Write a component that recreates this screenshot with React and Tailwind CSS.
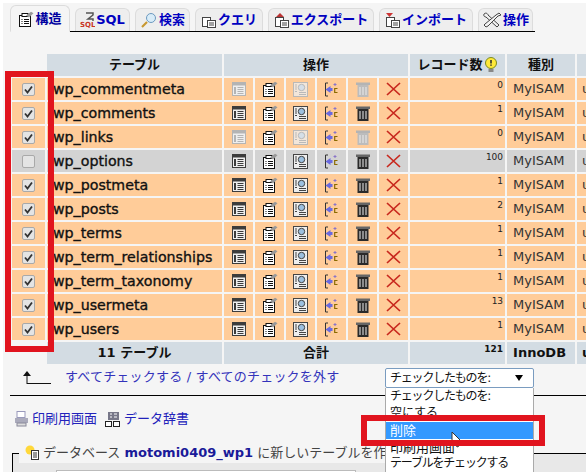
const FONT = "font-['DejaVu_Sans','Noto_Sans_CJK_JP',sans-serif]";

function Browse({ dim }) {
  const c = dim ? "#b4b4b4" : "#3c3c3c";
  return (
    <svg width="14" height="14" viewBox="0 0 14 14" className="block">
      <rect x="0.5" y="0.5" width="13" height="13" fill="#eee" stroke={c} />
      <rect x="1" y="1" width="12" height="2.5" fill={c} />
      <rect x="2" y="5" width="2" height="7" fill={c} />
      <path d="M5.5 5.5h6M5.5 7.5h6M5.5 9.5h6M5.5 11.5h6" stroke={c} />
    </svg>
  );
}
function Structure() {
  return (
    <svg width="16" height="16" viewBox="0 0 16 16" className="block">
      <rect x="1.5" y="4.5" width="11" height="11" fill="#fff" stroke="#111" />
      <rect x="4" y="2.5" width="6" height="3" fill="#fff" stroke="#111" />
      <path d="M3.5 8.5h1M6 8.5h5M3.5 10.5h1M6 10.5h5M3.5 12.5h1M6 12.5h5" stroke="#111" />
      <path d="M8 4.5L13 .7l2.5 1.5L11 6.5z" fill="#999" />
    </svg>
  );
}
function Search({ dim }) {
  const c = dim ? "#b9b9b9" : "#444";
  return (
    <svg width="15" height="15" viewBox="0 0 15 15" className="block">
      <rect x="0.5" y="0.5" width="14" height="14" fill={dim ? "#f2e6da" : "#eee"} stroke={c} />
      <circle cx="8.5" cy="5.5" r="3.2" fill={dim ? "#d5dfe8" : "#9cc0e0"} stroke={c} />
      <path d="M2 3h2M2 5h2M2 7h2M2 9.5h2M6 10.5h7M6 12.5h7" stroke={c} />
    </svg>
  );
}
function Insert() {
  return (
    <svg width="15" height="15" viewBox="0 0 15 15" className="block">
      <path d="M4 1H1.5v13H4" fill="none" stroke="#333" />
      <path d="M1.5 7.5l5-3.5v2h2v3h-2v2z" fill="#6a6ae0" />
      <path d="M13.5 6.5h-2.8v4h2.8" fill="none" stroke="#8a6a00" strokeWidth="1.2" />
      <path d="M11 1v3M9.5 2.5h3" stroke="#8a74c8" />
    </svg>
  );
}
function Trash({ dim }) {
  return (
    <svg width="14" height="15" viewBox="0 0 14 15" className="block">
      <rect x="0" y="0.5" width="14" height="2.5" fill={dim ? "#b4b4b4" : "#666"} />
      <path d="M1.5 3h11v12h-11z" fill={dim ? "#bcbcbc" : "#2a2a2a"} />
      <path d="M4 5v8M7 5v8M10 5v8" stroke={dim ? "#ececec" : "#eee"} />
    </svg>
  );
}
function Drop() {
  return (
    <svg width="15" height="14" viewBox="0 0 15 14" className="block">
      <path d="M1 1l13 12M14 1L1 13" stroke="#c8281e" strokeWidth="1.7" fill="none" />
    </svg>
  );
}
function Check({ on }) {
  return (
    <span className="flex h-[13px] w-[13px] items-center justify-center rounded-[2px] border border-[#a9a9a9] bg-[#e4e4e4]">
      {on && (
        <svg width="9" height="9" viewBox="0 0 9 9">
          <path d="M1 4.5l2.5 3L8 1.5" fill="none" stroke="#333" strokeWidth="1.8" />
        </svg>
      )}
    </span>
  );
}

const rows = [
  ["wp_commentmeta", "0", true, true],
  ["wp_comments", "1", true, false],
  ["wp_links", "0", true, true],
  ["wp_options", "100", false, false],
  ["wp_postmeta", "1", true, false],
  ["wp_posts", "2", true, false],
  ["wp_terms", "1", true, false],
  ["wp_term_relationships", "1", true, false],
  ["wp_term_taxonomy", "1", true, false],
  ["wp_usermeta", "13", true, false],
  ["wp_users", "1", true, false],
];

function Row({ name, count, on, dim }) {
  const bg = on ? "bg-[#ffcc99]" : "bg-[#d3d3d3]";
  const cell = `${bg} h-[22px] p-0`;
  const ic = "flex h-[22px] items-center justify-center";
  return (
    <tr>
      <td className={cell}><div className={ic}><Check on={on} /></div></td>
      <td className={`${cell} whitespace-nowrap pl-[6px] text-[14.2px] leading-[22px] text-[#111] [-webkit-text-stroke:0.35px_#111]`}>{name}</td>
      <td className={cell}><div className={ic}><Browse dim={dim} /></div></td>
      <td className={cell}><div className={ic}><Structure /></div></td>
      <td className={cell}><div className={ic}><Search dim={dim} /></div></td>
      <td className={cell}><div className={ic}><Insert /></div></td>
      <td className={cell}><div className={ic}><Trash dim={dim} /></div></td>
      <td className={cell}><div className={ic}><Drop /></div></td>
      <td className={`${cell} pr-[2px] text-right align-top text-[9px] leading-[14px] text-[#222]`}>{count}</td>
      <td className={`${cell} pl-[6px] text-[13px] leading-[22px] text-[#333]`}>MyISAM</td>
      <td className={`${cell} pl-[5px] text-[13px] leading-[22px] text-[#333]`}>utf8</td>
    </tr>
  );
}

function Tab({ icon, label, active, w }) {
  return (
    <div className={`flex items-center justify-center gap-[1px] rounded-t-[6px] border border-[#dcdcdc] text-[13px] font-semibold ${w} ${active ? "-mb-px h-[27px] border-b-[#f5f5f5] bg-[#f5f5f5] text-[#0000a0]" : "h-[23px] border-b-0 bg-[#eeeeee] text-[#0000c0]"}`}>
      {icon}
      <span>{label}</span>
    </div>
  );
}

function TabIcon({ color = "#444", kind }) {
  if (kind === "sql")
    return (
      <svg width="15" height="16" viewBox="0 0 15 16"><path d="M6 1h7v2L8 7h5v2" fill="none" stroke="#555" strokeWidth="1.5" /><text x="0" y="15" fontSize="7" fontWeight="700" fill="#c8341e">SQL</text></svg>
    );
  if (kind === "search")
    return (
      <svg width="18" height="16" viewBox="0 0 18 16"><circle cx="11" cy="6" r="4.5" fill="#d8ecf8" stroke="#6c9ac0" /><path d="M7 10l-5 5" stroke="#c89830" strokeWidth="2.2" /></svg>
    );
  if (kind === "ops")
    return (
      <svg width="20" height="16" viewBox="0 0 20 16">
        <path d="M2 2c2-2 4 0 4 1l11 10-2 2L4 5C3 5 1 4 2 2z" fill="#f2f2f2" stroke="#444" />
        <path d="M17 1l2 2-3 1L6 14l-2 1-2-2 1-1L14 3z" fill="#f2f2f2" stroke="#444" />
      </svg>
    );
  return (
    <svg width="16" height="15" viewBox="0 0 16 15">
      {kind === "export" && <path d="M6 0l4 4H2z" fill="#b33" />}
      {kind === "import" && <path d="M1 0h7L4.5 4z" fill="#c33" />}
      <rect x="1.5" y="4.5" width="8" height="9" fill="#fff" stroke={color} />
      <rect x="6.5" y="7.5" width="8" height="7" fill="#fff" stroke={color} />
      <path d="M8 10h5M8 12h5" stroke={color} />
    </svg>
  );
}

export default function App() {
  const th = "bg-[#d3dce3] h-[22px] p-0 text-center text-[13px] font-semibold text-[#111]";
  const tf = "bg-[#d3dce3] h-[22px] p-0 font-semibold text-[#111]";
  return (
    <div className={`relative box-border h-[472px] w-[586px] overflow-hidden border-l-[3px] border-t-[3px] border-white bg-[#f5f5f5] ${FONT}`}>
      <div className="ml-[7px] flex h-[29px] w-[525px] items-end gap-[5px] border-b border-black">
        <Tab active w="w-[60px]" label="構造" icon={<Structure />} />
        <Tab w="w-[55px]" label="SQL" icon={<TabIcon kind="sql" />} />
        <Tab w="w-[55px]" label="検索" icon={<TabIcon kind="search" />} />
        <Tab w="w-[68px]" label="クエリ" icon={<TabIcon kind="query" />} />
        <Tab w="w-[106px]" label="エクスポート" icon={<TabIcon kind="export" />} />
        <Tab w="w-[94px]" label="インポート" icon={<TabIcon kind="import" />} />
        <Tab w="w-[55px]" label="操作" icon={<TabIcon kind="ops" />} />
      </div>

      <table className="ml-[7px] mt-[20px] w-[612px] table-fixed border-separate border-spacing-[2px]">
        <colgroup>
          <col className="w-[33px]" />
          <col className="w-[175px]" />
          <col className="w-[29px]" />
          <col className="w-[29px]" />
          <col className="w-[29px]" />
          <col className="w-[29px]" />
          <col className="w-[29px]" />
          <col className="w-[29px]" />
          <col className="w-[95px]" />
          <col className="w-[68px]" />
          <col />
        </colgroup>
        <thead>
          <tr>
            <th className="p-0" />
            <th className={th}>テーブル</th>
            <th className={th} colSpan={6}>操作</th>
            <th className={th}>
              <span className="inline-flex items-center gap-[1px]">
                レコード数
                <svg width="14" height="16" viewBox="0 0 14 16">
                  <circle cx="7" cy="6" r="5.5" fill="#ffe93a" stroke="#7a8a20" />
                  <path d="M7 3v3.5M7 7.6v1.2" stroke="#333" strokeWidth="1.6" />
                  <rect x="4.5" y="12" width="5" height="3" fill="#888" />
                </svg>
              </span>
            </th>
            <th className={th}>種別</th>
            <th className={th} />
          </tr>
        </thead>
        <tbody>
          {rows.map((r) => (
            <Row key={r[0]} name={r[0]} count={r[1]} on={r[2]} dim={r[3]} />
          ))}
        </tbody>
        <tfoot>
          <tr>
            <td className="p-0" />
            <td className={`${tf} text-center text-[13px]`}>11 テーブル</td>
            <td className={`${tf} text-center text-[13px]`} colSpan={6}>合計</td>
            <td className={`${tf} pr-[2px] text-right align-top text-[9px] font-bold leading-[14px]`}>121</td>
            <td className={`${tf} pl-[6px] text-[13px]`}>InnoDB</td>
            <td className={`${tf} pl-[5px] text-[13px]`}>utf8</td>
          </tr>
        </tfoot>
      </table>

      <div className="ml-[18px] flex h-[22px] items-center gap-[14px] text-[13px] tracking-[0.2px] text-[#3333bb]">
        <svg width="30" height="14" viewBox="0 0 30 14" className="block">
          <path d="M6 14V3M6 13.5h24" stroke="#111" strokeWidth="1" fill="none" />
          <path d="M2 6l4-5 4 5z" fill="#111" />
        </svg>
        <span>すべてチェックする / すべてのチェックを外す</span>
      </div>
      <div className="ml-[7px] mt-[7px] h-px w-[576px] bg-black" />

      <div className="ml-[11px] mt-[13px] flex h-[19px] items-center gap-[8px] text-[13px] text-[#2222bb]">
        <span className="flex items-center gap-[3px]">
          <svg width="15" height="16" viewBox="0 0 15 16">
            <rect x="3" y="0.5" width="8" height="6" fill="#fff" stroke="#99b" />
            <path d="M1 7h13v5H1z" fill="#aab" />
            <rect x="3" y="12" width="9" height="3" fill="#ddd" stroke="#889" />
          </svg>
          印刷用画面
        </span>
        <span className="flex items-center gap-[3px]">
          <svg width="16" height="16" viewBox="0 0 16 16">
            <rect x="3" y="1" width="11" height="8" fill="#778" />
            <path d="M5 3h2M9 3h3M5 6h2M9 6h3" stroke="#fff" />
            <rect x="0.5" y="10.5" width="6" height="5" fill="#fff" stroke="#222" />
            <rect x="8.5" y="10.5" width="6" height="5" fill="#fff" stroke="#222" />
          </svg>
          データ辞書
        </span>
      </div>

      <div className="relative ml-[9px] mt-[25px] h-[40px] w-[574px] border-l border-t border-black bg-[#e8e8e8]">
        <div className="absolute -top-[11px] left-[6px] flex items-center gap-[3px] bg-[#f5f5f5] pl-[6px] pr-[1px] text-[13px] text-[#444]">
          <svg width="15" height="16" viewBox="0 0 15 16">
            <circle cx="5" cy="5" r="4.5" fill="#ffd83a" />
            <rect x="6.5" y="5.5" width="7" height="9" fill="#fff" stroke="#333" />
            <path d="M8 8h4M8 10h4M8 12h4" stroke="#333" />
          </svg>
          <span>データベース <b className="font-semibold text-[#1a1a99]">motomi0409_wp1</b> に新しいテーブルを作成する</span>
        </div>
        <div className="absolute left-[43px] top-[16px] h-[20px] w-[300px] border border-[#bbb] bg-white" />
      </div>

      {/* open select */}
      <div className="absolute left-[382px] top-[365px] w-[149px] text-[#111]">
        <div className="flex h-[20px] items-center justify-between rounded-[2px] border border-[#7a9cc0] bg-white pl-[4px] pr-[10px] text-[12px] tracking-[-1.2px]">
          <span>チェックしたものを:</span>
          <span className="h-0 w-0 border-x-[4px] border-t-[6px] border-x-transparent border-t-black" />
        </div>
        <div className="h-[85px] overflow-hidden border-x border-[#aaa] bg-white text-[12px] leading-[17px]">
          <div className="h-[17px] pl-[4px] tracking-[-1.2px]">チェックしたものを:</div>
          <div className="h-[17px] pl-[4px]">空にする</div>
          <div className="h-[17px] bg-[#3399ff] pl-[4px] text-[13px] text-white">削除</div>
          <div className="h-[16px] pl-[4px] text-[13px]">印刷用画面</div>
          <div className="h-[17px] whitespace-nowrap pl-[4px] tracking-[-1.2px]">テーブルをチェックする</div>
        </div>
      </div>

      {/* cursor */}
      <svg width="12" height="18" viewBox="0 0 12 18" className="absolute left-[448px] top-[428px]">
        <path d="M1 1v13l3-3 2 5 2-1-2-5h4z" fill="#fff" stroke="#333" />
      </svg>

      {/* red callouts */}
      <div className="absolute left-[2px] top-[68px] h-[281px] w-[49px] border-[6px] border-[#e1141e]" />
      <div className="absolute left-[358px] top-[412px] h-[31px] w-[184px] border-[6px] border-[#e1141e]" />
    </div>
  );
}
